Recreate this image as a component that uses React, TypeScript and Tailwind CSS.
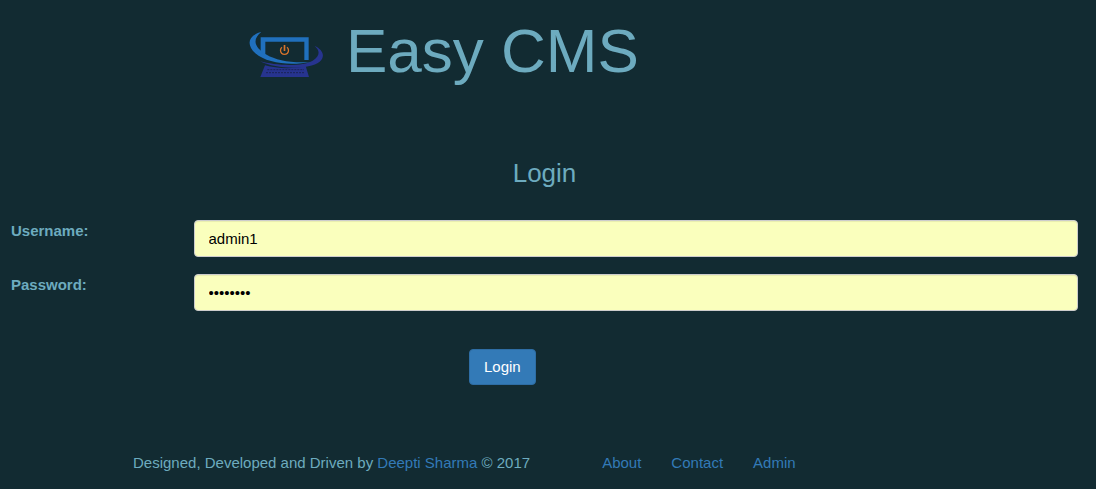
function Logo() {
  return (
    <svg viewBox="27 30 225 150" className="h-[50px] w-[75px] shrink-0" role="img" aria-label="Easy CMS logo">
      <path d="M75 136C110 146 160 148 197 138L207 171H61Z" fill="#27348f" />
      <path d="M82 149H192M78 158H194" stroke="#1b2458" strokeWidth="3" strokeDasharray="6 3" fill="none" />
      <path d="M224 78C247 88 258 108 239 125C206 150 112 149 60 124C104 136 185 142 218 122C241 108 240 92 224 78Z" fill="#27348f" />
      <path d="M62 52H206V120H193V65H76V104L62 96Z" fill="#2070bd" />
      <path d="M64 36C24 46 18 74 46 100C80 130 150 138 212 126C152 130 108 120 80 104C42 82 36 58 64 36Z" fill="#2070bd" />
      <path d="M126 82A12 12 0 1 0 141 82" fill="none" stroke="#d9742b" strokeWidth="4" />
      <path d="M133.500 75V93" stroke="#d9742b" strokeWidth="5" />
    </svg>
  );
}

type FieldProps = { id: string; label: string; type: string; value: string };

function Field({ id, label, type, value }: FieldProps) {
  return (
    <div className="flex items-start">
      <label htmlFor={id} className="w-1/6 shrink-0 px-[11px] font-bold">
        {label}
      </label>
      <div className="min-w-0 flex-1 pr-[11px] pl-3">
        <input
          id={id}
          name={id}
          type={type}
          defaultValue={value}
          className="block h-[37px] w-full rounded-[4px] border border-[#cccccc] bg-[#faffbd] px-[14px] text-black shadow-[inset_0_1px_1px_rgba(0,0,0,0.075)]"
        />
      </div>
    </div>
  );
}

export default function App() {
  return (
    <div className="min-h-screen bg-[#122b32] font-['Liberation_Sans',Arial,sans-serif] text-[15px] leading-[22px] text-[#6dabbf]">
      <header className="flex items-start gap-[22px] pt-[17px] pl-[249px]">
        <div className="pt-[13px]">
          <Logo />
        </div>
        <h1 className="text-[62px] leading-[68px] whitespace-nowrap">Easy CMS</h1>
      </header>
      <main className="pt-[74px] pr-[7px]">
        <h3 className="text-center text-[26px] leading-[29px]">Login</h3>
        <form className="mt-8" onSubmit={(e) => e.preventDefault()}>
          <div className="flex flex-col gap-[17px]">
            <Field id="username" label="Username:" type="text" value="admin1" />
            <Field id="password" label="Password:" type="password" value="password" />
          </div>
          <div className="mt-[38px] pl-[469px]">
            <button
              type="submit"
              className="block h-9 rounded-[4px] border border-[#2e6da4] bg-[#337ab7] px-[14px] text-white"
            >
              Login
            </button>
          </div>
        </form>
      </main>
      <footer className="flex gap-[72px] pt-[67px] pb-[15px] pl-[133px]">
        <p>
          Designed, Developed and Driven by{" "}
          <a href="#author" className="text-[#337ab7]">Deepti Sharma</a> © 2017
        </p>
        <nav className="flex gap-[30px] text-[#337ab7]">
          <a href="#about">About</a>
          <a href="#contact">Contact</a>
          <a href="#admin">Admin</a>
        </nav>
      </footer>
    </div>
  );
}
